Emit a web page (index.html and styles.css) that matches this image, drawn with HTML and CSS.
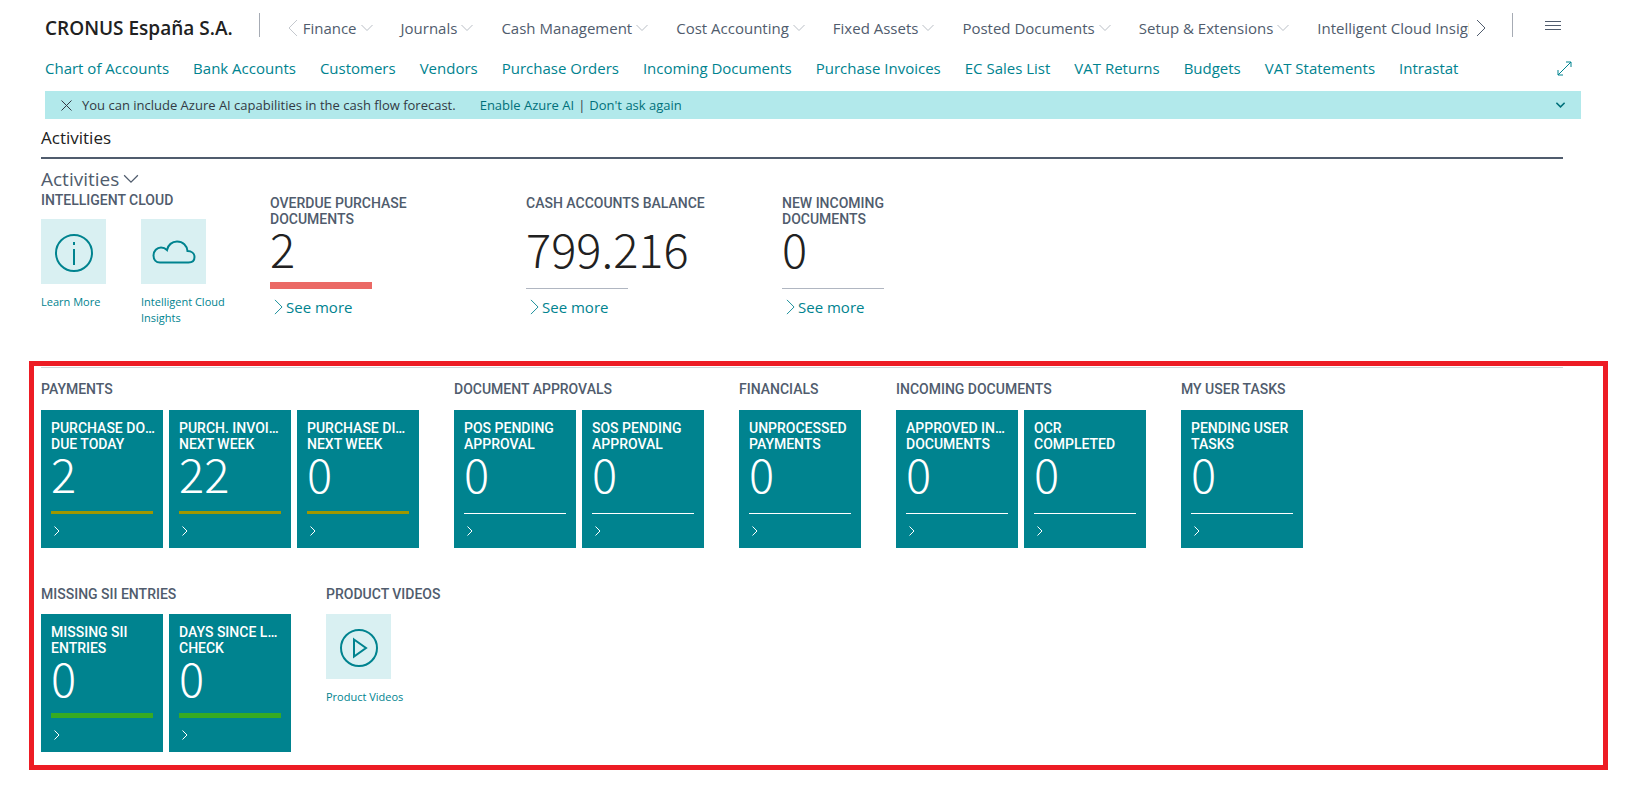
FILE: index.html
```html
<!DOCTYPE html>
<html lang="en">
  <head>
    <meta charset="UTF-8" />
    <meta name="viewport" content="width=device-width, initial-scale=1.0" />
    <title>CRONUS España S.A. - Role Center</title>
    <link rel="stylesheet" href="styles.css">
  </head>
  <body>
    <!-- shared icons -->
    <svg class="sprite" aria-hidden="true">
      <symbol id="chev-down" viewBox="0 0 12 8"><path d="M0.5 1 L6 6.5 L11.5 1" /></symbol>
      <symbol id="chev-right" viewBox="0 0 10 18"><path d="M1 1 L9 9 L1 17" /></symbol>
      <symbol id="chev-left" viewBox="0 0 10 18"><path d="M9 1 L1 9 L9 17" /></symbol>
      <symbol id="chev-small" viewBox="0 0 6 10"><path d="M0.5 0.5 L5 5 L0.5 9.5" /></symbol>
    </svg>

    <header class="top-bar">
      <a class="company" href="#">CRONUS España S.A.</a>
      <span class="divider"></span>
      <button class="scroll-btn left" aria-label="Scroll left"><svg><use href="#chev-left" /></svg></button>
      <nav class="main-nav">
        <button>Finance<svg><use href="#chev-down" /></svg></button>
        <button>Journals<svg><use href="#chev-down" /></svg></button>
        <button>Cash Management<svg><use href="#chev-down" /></svg></button>
        <button>Cost Accounting<svg><use href="#chev-down" /></svg></button>
        <button>Fixed Assets<svg><use href="#chev-down" /></svg></button>
        <button>Posted Documents<svg><use href="#chev-down" /></svg></button>
        <button>Setup &amp; Extensions<svg><use href="#chev-down" /></svg></button>
        <button>Intelligent Cloud Insights<svg><use href="#chev-down" /></svg></button>
      </nav>
      <button class="scroll-btn" aria-label="Scroll right"><svg><use href="#chev-right" /></svg></button>
      <span class="divider"></span>
      <button class="menu-btn" aria-label="Menu">
        <svg viewBox="0 0 16 10"><path d="M0 0.5 H16 M0 4.5 H16 M0 8.5 H16" /></svg>
      </button>
    </header>

    <nav class="sub-nav">
      <a href="#">Chart of Accounts</a>
      <a href="#">Bank Accounts</a>
      <a href="#">Customers</a>
      <a href="#">Vendors</a>
      <a href="#">Purchase Orders</a>
      <a href="#">Incoming Documents</a>
      <a href="#">Purchase Invoices</a>
      <a href="#">EC Sales List</a>
      <a href="#">VAT Returns</a>
      <a href="#">Budgets</a>
      <a href="#">VAT Statements</a>
      <a href="#">Intrastat</a>
      <button class="expand-btn" aria-label="Expand">
        <svg viewBox="0 0 15 15"><path d="M1 14 L14 1 M9 1 H14 V6 M1 9 V14 H6" /></svg>
      </button>
    </nav>

    <div class="notification">
      <button class="close-btn" aria-label="Close"><svg viewBox="0 0 11 11"><path d="M0.5 0.5 L10.5 10.5 M10.5 0.5 L0.5 10.5" /></svg></button>
      <span class="message">You can include Azure AI capabilities in the cash flow forecast.</span>
      <a href="#">Enable Azure AI</a>
      <span class="pipe">|</span>
      <a href="#">Don't ask again</a>
      <button class="more-btn" aria-label="Show more"><svg><use href="#chev-down" /></svg></button>
    </div>

    <main>
      <section class="activities">
        <h1>Activities</h1>
        <h2><button>Activities<svg><use href="#chev-down" /></svg></button></h2>
        <div class="kpi-row">
          <div class="cloud-group">
            <h3>Intelligent Cloud</h3>
            <div class="icon-tiles">
              <a class="icon-tile" href="#">
                <span class="icon-box">
                  <svg viewBox="0 0 65 65"><circle cx="33" cy="34" r="18" /><path d="M33 30 V46 M33 23 V26" /></svg>
                </span>
                <span>Learn More</span>
              </a>
              <a class="icon-tile wide" href="#">
                <span class="icon-box">
                  <svg viewBox="0 0 65 65"><path d="M19 43.5 C15 43.5 12.500 40.500 12.500 36.500 C12.500 32 16 28.500 20 28.500 C22.500 28.500 24.500 29.500 26 31 C27 26 31 22.500 36 22.500 C42 22.500 46 26.500 46.500 32 C50.500 32 53.500 34.500 53.500 38 C53.500 41.500 51 43.500 47.500 43.500 Z" /></svg>
                </span>
                <span>Intelligent Cloud Insights</span>
              </a>
            </div>
          </div>
          <div class="kpi">
            <h3>Overdue Purchase Documents</h3>
            <span class="number">2</span>
            <span class="bar bad"></span>
            <a href="#"><svg><use href="#chev-right" /></svg>See more</a>
          </div>
          <div class="kpi">
            <h3>Cash Accounts Balance</h3>
            <span class="number">799.216</span>
            <span class="bar"></span>
            <a href="#"><svg><use href="#chev-right" /></svg>See more</a>
          </div>
          <div class="kpi">
            <h3>New Incoming Documents</h3>
            <span class="number">0</span>
            <span class="bar"></span>
            <a href="#"><svg><use href="#chev-right" /></svg>See more</a>
          </div>
        </div>
      </section>

      <section class="highlight">
        <div class="cue-row">
          <div class="cue-group">
            <h3>Payments</h3>
            <div class="tiles">
              <a class="tile" href="#">
                <span class="line">Purchase Documents</span><span class="line">Due Today</span>
                <span class="number">2</span><span class="bar warn"></span>
                <svg><use href="#chev-small" /></svg>
              </a>
              <a class="tile" href="#">
                <span class="line">Purch. Invoices Due</span><span class="line">Next Week</span>
                <span class="number">22</span><span class="bar warn"></span>
                <svg><use href="#chev-small" /></svg>
              </a>
              <a class="tile" href="#">
                <span class="line">Purchase Discounts</span><span class="line">Next Week</span>
                <span class="number">0</span><span class="bar warn"></span>
                <svg><use href="#chev-small" /></svg>
              </a>
            </div>
          </div>
          <div class="cue-group">
            <h3>Document Approvals</h3>
            <div class="tiles">
              <a class="tile" href="#">
                <span class="line">POs Pending</span><span class="line">Approval</span>
                <span class="number">0</span><span class="bar"></span>
                <svg><use href="#chev-small" /></svg>
              </a>
              <a class="tile" href="#">
                <span class="line">SOs Pending</span><span class="line">Approval</span>
                <span class="number">0</span><span class="bar"></span>
                <svg><use href="#chev-small" /></svg>
              </a>
            </div>
          </div>
          <div class="cue-group">
            <h3>Financials</h3>
            <div class="tiles">
              <a class="tile" href="#">
                <span class="line">Unprocessed</span><span class="line">Payments</span>
                <span class="number">0</span><span class="bar"></span>
                <svg><use href="#chev-small" /></svg>
              </a>
            </div>
          </div>
          <div class="cue-group">
            <h3>Incoming Documents</h3>
            <div class="tiles">
              <a class="tile" href="#">
                <span class="line">Approved Incoming</span><span class="line">Documents</span>
                <span class="number">0</span><span class="bar"></span>
                <svg><use href="#chev-small" /></svg>
              </a>
              <a class="tile" href="#">
                <span class="line">OCR</span><span class="line">Completed</span>
                <span class="number">0</span><span class="bar"></span>
                <svg><use href="#chev-small" /></svg>
              </a>
            </div>
          </div>
          <div class="cue-group">
            <h3>My User Tasks</h3>
            <div class="tiles">
              <a class="tile" href="#">
                <span class="line">Pending User</span><span class="line">Tasks</span>
                <span class="number">0</span><span class="bar"></span>
                <svg><use href="#chev-small" /></svg>
              </a>
            </div>
          </div>
        </div>

        <div class="cue-row">
          <div class="cue-group">
            <h3>Missing SII Entries</h3>
            <div class="tiles">
              <a class="tile" href="#">
                <span class="line">Missing SII</span><span class="line">Entries</span>
                <span class="number">0</span><span class="bar good"></span>
                <svg><use href="#chev-small" /></svg>
              </a>
              <a class="tile" href="#">
                <span class="line">Days Since Last</span><span class="line">Check</span>
                <span class="number">0</span><span class="bar good"></span>
                <svg><use href="#chev-small" /></svg>
              </a>
            </div>
          </div>
          <div class="cue-group">
            <h3>Product Videos</h3>
            <a class="icon-tile wide" href="#">
              <span class="icon-box">
                <svg viewBox="0 0 65 65"><circle cx="33" cy="34" r="18" /><path d="M28 25.500 L40 34 L28 42.500 Z" /></svg>
              </span>
              <span>Product Videos</span>
            </a>
          </div>
        </div>
      </section>
    </main>
  </body>
</html>
```

FILE: styles.css
```css
* {
  box-sizing: border-box;
}

body {
  margin: 0;
  background: #fff;
  color: #505c6d;
  font-family: "Open Sans", sans-serif;
  font-size: 15px;
}

h1, h2, h3 {
  margin: 0;
  font-weight: 400;
}

a {
  color: #00838f;
  text-decoration: none;
}

button {
  padding: 0;
  border: 0;
  background: none;
  color: inherit;
  font: inherit;
  cursor: pointer;
}

svg {
  display: block;
  flex: none;
  fill: none;
  stroke: currentColor;
}

.sprite {
  position: absolute;
  width: 0;
  height: 0;
}

/* header */
.top-bar {
  display: flex;
  align-items: center;
  height: 48px;
  margin: 4px 75px 0 45px;
}

.company {
  color: #212121;
  font-size: 19px;
  font-weight: 600;
  white-space: nowrap;
}

.divider {
  flex: none;
  width: 1px;
  height: 24px;
  margin: 0 28px 6px 26px;
  background: #a6abb4;
}

.scroll-btn svg {
  width: 10px;
  height: 18px;
}

.scroll-btn.left {
  margin-right: 5px;
  color: #c4c8ce;
}

.main-nav {
  display: flex;
  flex: 1;
  gap: 28px;
  min-width: 0;
  margin-right: 7px;
  overflow: hidden;
}

.main-nav button {
  display: flex;
  align-items: center;
  gap: 4px;
  white-space: nowrap;
}

.main-nav svg {
  width: 12px;
  height: 8px;
  color: #b9bec5;
}

.menu-btn {
  margin: 0 0 4px 4px;
}

.menu-btn svg {
  width: 16px;
  height: 10px;
}

.sub-nav {
  display: flex;
  align-items: center;
  gap: 24px;
  height: 32px;
  margin: 0 64px 0 45px;
  white-space: nowrap;
}

.expand-btn {
  margin-left: auto;
  color: #00838f;
}

.expand-btn svg {
  width: 15px;
  height: 15px;
}

.notification {
  display: flex;
  align-items: center;
  height: 28px;
  margin: 7px 55px 0 45px;
  padding: 0 16px;
  background: #b2e9eb;
  color: #333a44;
  font-size: 13px;
}

.notification a {
  color: #00707a;
}

.notification .message {
  margin: 0 24px 0 10px;
}

.notification .pipe {
  margin: 0 4px;
}

.close-btn svg {
  width: 11px;
  height: 11px;
}

.more-btn {
  margin-left: auto;
  color: #00707a;
}

.more-btn svg {
  width: 9px;
  height: 6px;
  stroke-width: 2;
}

/* activities */
.activities {
  margin: 0 73px 0 41px;
}

.activities h1 {
  padding: 7px 0;
  border-bottom: 2px solid #505c6d;
  color: #212121;
  font-size: 17px;
  line-height: 24px;
}

.activities h2 {
  margin-top: 7px;
  font-size: 19px;
  line-height: 26px;
}

.activities h2 button {
  display: flex;
  align-items: center;
  gap: 4px;
}

.activities h2 svg {
  width: 16px;
  height: 10px;
}

h3,
.tile .line {
  font-family: Roboto, sans-serif;
  font-size: 14px;
  font-weight: 500;
  line-height: 16px;
  text-transform: uppercase;
}

.kpi-row {
  display: flex;
  height: 169px;
}

.cloud-group {
  width: 229px;
}

.icon-tiles {
  display: flex;
  gap: 35px;
  margin-top: 11px;
}

.icon-tile {
  display: block;
  width: 65px;
  font-size: 11px;
  line-height: 16px;
}

.icon-tile.wide {
  width: 94px;
}

.icon-tile span {
  display: block;
}

.icon-box {
  width: 65px;
  height: 65px;
  margin-bottom: 10px;
  background: #d9f0f2;
}

.icon-box svg {
  stroke-width: 2;
}

.kpi {
  width: 256px;
  padding: 3px 0 0;
}

.kpi h3 {
  width: 180px;
  height: 32px;
}

.kpi:last-child h3,
.kpi:nth-child(2) h3 {
  width: 140px;
}

.number {
  display: block;
  height: 50px;
  font-family: "Noto Sans CJK SC", sans-serif;
  font-size: 47px;
  font-weight: 300;
  line-height: 42px;
}

.kpi .number {
  color: #212121;
}

.bar {
  display: block;
  width: 102px;
  height: 12px;
  border-bottom: 1px solid #b0b6c1;
}

.bar.bad {
  border-bottom: 7px solid #eb6965;
}

.kpi a {
  display: flex;
  align-items: center;
  gap: 3px;
  margin: 8px 0 0 4px;
}

.kpi svg {
  width: 9px;
  height: 16px;
}

/* red outlined area with the cues */
.highlight {
  margin: 0 28px 0 29px;
  padding: 1px 40px 13px 7px;
  border: 5px solid #ed1c24;
}

.cue-row {
  display: flex;
  gap: 35px;
}

.cue-row:first-child {
  padding-top: 13px;
  border-top: 1px solid #d2d5d9;
}

.cue-row + .cue-row {
  margin-top: 38px;
}

.cue-group h3 {
  margin-bottom: 13px;
  white-space: nowrap;
}

.cue-row + .cue-row h3 {
  margin-bottom: 12px;
}

.tiles {
  display: flex;
  gap: 6px;
}

.tile {
  display: block;
  width: 122px;
  height: 138px;
  padding: 10px 6px 10px 10px;
  background: #00838f;
  color: #fff;
}

.tile .line {
  display: block;
  overflow: hidden;
  white-space: nowrap;
  text-overflow: ellipsis;
}

.tile .bar {
  border-bottom-color: #fff;
}

.tile .bar.warn {
  border-bottom: 3px solid #9f9700;
}

.tile .bar.good {
  border-bottom: 5px solid #37ab22;
}

.tile svg {
  width: 6px;
  height: 10px;
  margin: 12px 0 0 3px;
}
```
